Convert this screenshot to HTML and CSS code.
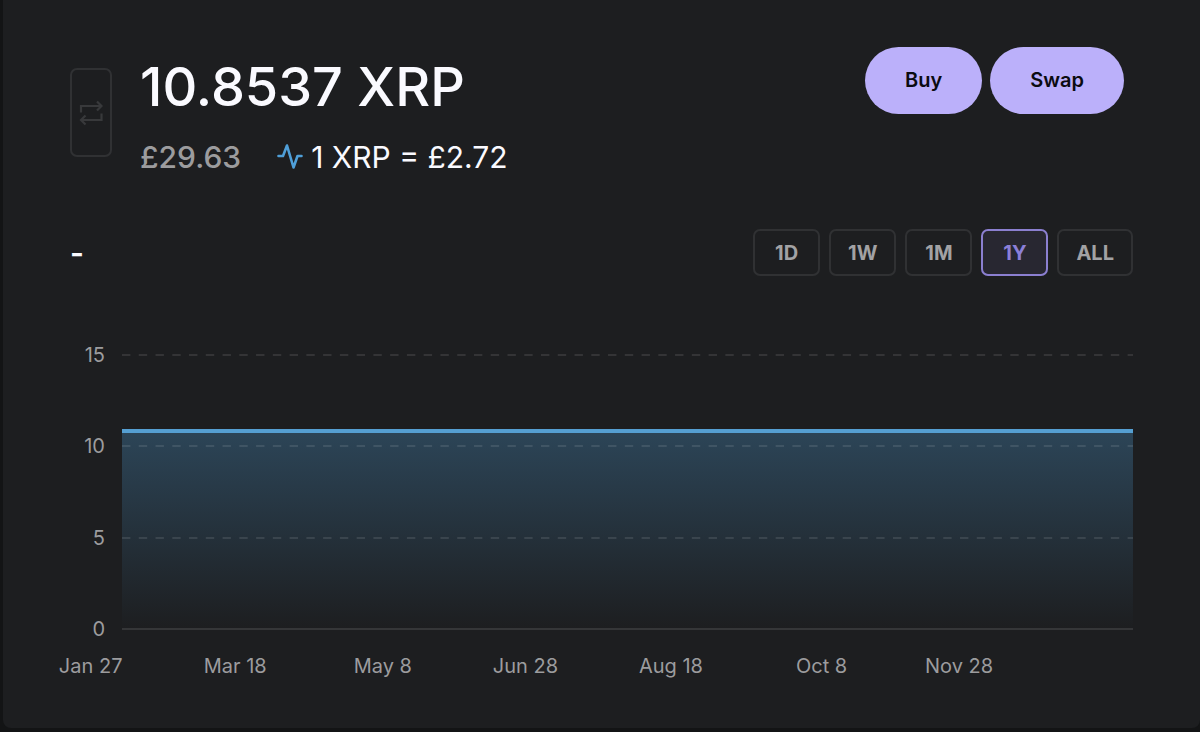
FILE: index.html
```html
<!DOCTYPE html>
<html lang="en">

<head>
  <meta charset="utf-8">
  <title>XRP Wallet</title>
  <link rel="stylesheet" href="styles.css">
</head>

<body>
  <main class="card">
    <header class="header">
      <button type="button" class="toggle" aria-label="Switch currency">
        <svg width="24" height="26" viewBox="0 0 24 26" fill="none" stroke="currentColor" stroke-width="2.2">
          <path d="M2 12.500V6H22.500M18 1.500L22.500 6 18 10.500M22.500 13.500V20H2M6.500 15.500L2 20l4.500 4.500" />
        </svg>
      </button>

      <div class="balance">
        <h1>10.8537 XRP</h1>
        <div class="prices">
          <span class="fiat">£29.63</span>
          <span class="rate">
            <svg width="26" height="26" viewBox="0 0 26 26" fill="none" stroke="#4f9fd8" stroke-width="2.6" stroke-linecap="round" stroke-linejoin="round">
              <path d="M1.500 12h4.500L10 1.500l6.500 22L20.500 12h4" />
            </svg>
            1 XRP = £2.72
          </span>
        </div>
      </div>

      <div class="actions">
        <button type="button">Buy</button>
        <button type="button">Swap</button>
      </div>
    </header>

    <div class="toolbar">
      <span class="change">-</span>
      <div class="ranges">
        <button type="button">1D</button>
        <button type="button">1W</button>
        <button type="button">1M</button>
        <button type="button" class="active" aria-pressed="true">1Y</button>
        <button type="button">ALL</button>
      </div>
    </div>

    <div class="chart">
      <svg class="plot" role="img" aria-label="XRP balance over one year">
        <defs>
          <linearGradient id="fill" x1="0" y1="0" x2="0" y2="1">
            <stop offset="0" stop-color="#4f9fd8" stop-opacity="0.3" />
            <stop offset="1" stop-color="#4f9fd8" stop-opacity="0" />
          </linearGradient>
        </defs>

        <rect x="0" y="88" width="100%" height="197" fill="url(#fill)" />

        <g class="grid">
          <line x1="0" y1="11" x2="100%" y2="11" />
          <line x1="0" y1="102" x2="100%" y2="102" />
          <line x1="0" y1="194" x2="100%" y2="194" />
        </g>
        <line class="axis" x1="0" y1="285" x2="100%" y2="285" />
        <line class="series" x1="0" y1="87" x2="100%" y2="87" />

        <g class="y-labels">
          <text x="-17" y="18">15</text>
          <text x="-17" y="109">10</text>
          <text x="-17" y="201">5</text>
          <text x="-17" y="292">0</text>
        </g>
        <g class="x-labels">
          <text x="-3.1%" y="329">Jan 27</text>
          <text x="11.2%" y="329">Mar 18</text>
          <text x="25.8%" y="329">May 8</text>
          <text x="39.9%" y="329">Jun 28</text>
          <text x="54.3%" y="329">Aug 18</text>
          <text x="69.2%" y="329">Oct 8</text>
          <text x="82.8%" y="329">Nov 28</text>
        </g>
      </svg>
    </div>
  </main>
</body>

</html>
```

FILE: styles.css
```css
* {
  box-sizing: border-box;
}

body {
  margin: 0;
  padding: 0 0 4px 3px;
  background-color: #131415;
  color: #fafaff;
  font-family: Inter, "Noto Sans", sans-serif;
}

button {
  font-family: inherit;
  cursor: pointer;
}

.card {
  min-height: calc(100vh - 4px);
  padding: 47px 67px 40px;
  background-color: #1d1e20;
  border-radius: 0 0 8px 8px;
}

.header {
  display: flex;
  align-items: flex-start;
  padding-right: 9px;
}

.toggle {
  display: flex;
  align-items: center;
  justify-content: center;
  width: 42px;
  height: 89px;
  margin: 21px 28px 0 0;
  padding: 0;
  background: none;
  border: 2px solid #303133;
  border-radius: 7px;
  color: #38393b;
}

.balance {
  flex: 1;
  padding-top: 8px;
}

h1 {
  margin: 0;
  font-size: 54px;
  font-weight: 500;
  line-height: 64px;
}

.prices {
  display: flex;
  align-items: center;
  gap: 36px;
  margin-top: 18px;
  font-size: 30px;
  line-height: 40px;
}

.fiat {
  color: #9c9c9e;
  font-weight: 500;
}

.rate {
  display: flex;
  align-items: center;
  gap: 8px;
}

.actions {
  display: flex;
  gap: 8px;
}

.actions button {
  height: 67px;
  padding: 0 40px 2px;
  background-color: #bbb0fa;
  border: none;
  border-radius: 34px;
  color: #0b0b10;
  font-size: 20px;
  font-weight: 600;
}

.toolbar {
  display: flex;
  align-items: center;
  justify-content: space-between;
  margin-top: 52px;
}

.change {
  font-size: 30px;
  font-weight: 600;
}

.ranges {
  display: flex;
  gap: 9px;
}

.ranges button {
  min-width: 67px;
  height: 47px;
  padding: 0 17px;
  background: none;
  border: 2px solid #303133;
  border-radius: 7px;
  color: #a2a2a4;
  font-size: 20px;
  font-weight: 700;
}

.ranges .active {
  background-color: #282731;
  border-color: #8b7fd0;
  color: #8b7fd8;
}

.chart {
  margin: 68px 0 0 52px;
}

.plot {
  display: block;
  width: 100%;
  height: 340px;
  overflow: visible;
}

.grid line {
  stroke: #fff;
  stroke-opacity: 0.1;
  stroke-width: 2;
  stroke-dasharray: 8.4 8.36;
}

.axis {
  stroke: #353638;
  stroke-width: 2;
}

.series {
  stroke: #559fd2;
  stroke-width: 4;
}

.plot text {
  fill: #9c9c9e;
  font-size: 20px;
}

.y-labels {
  text-anchor: end;
}

.x-labels {
  text-anchor: middle;
}
```
